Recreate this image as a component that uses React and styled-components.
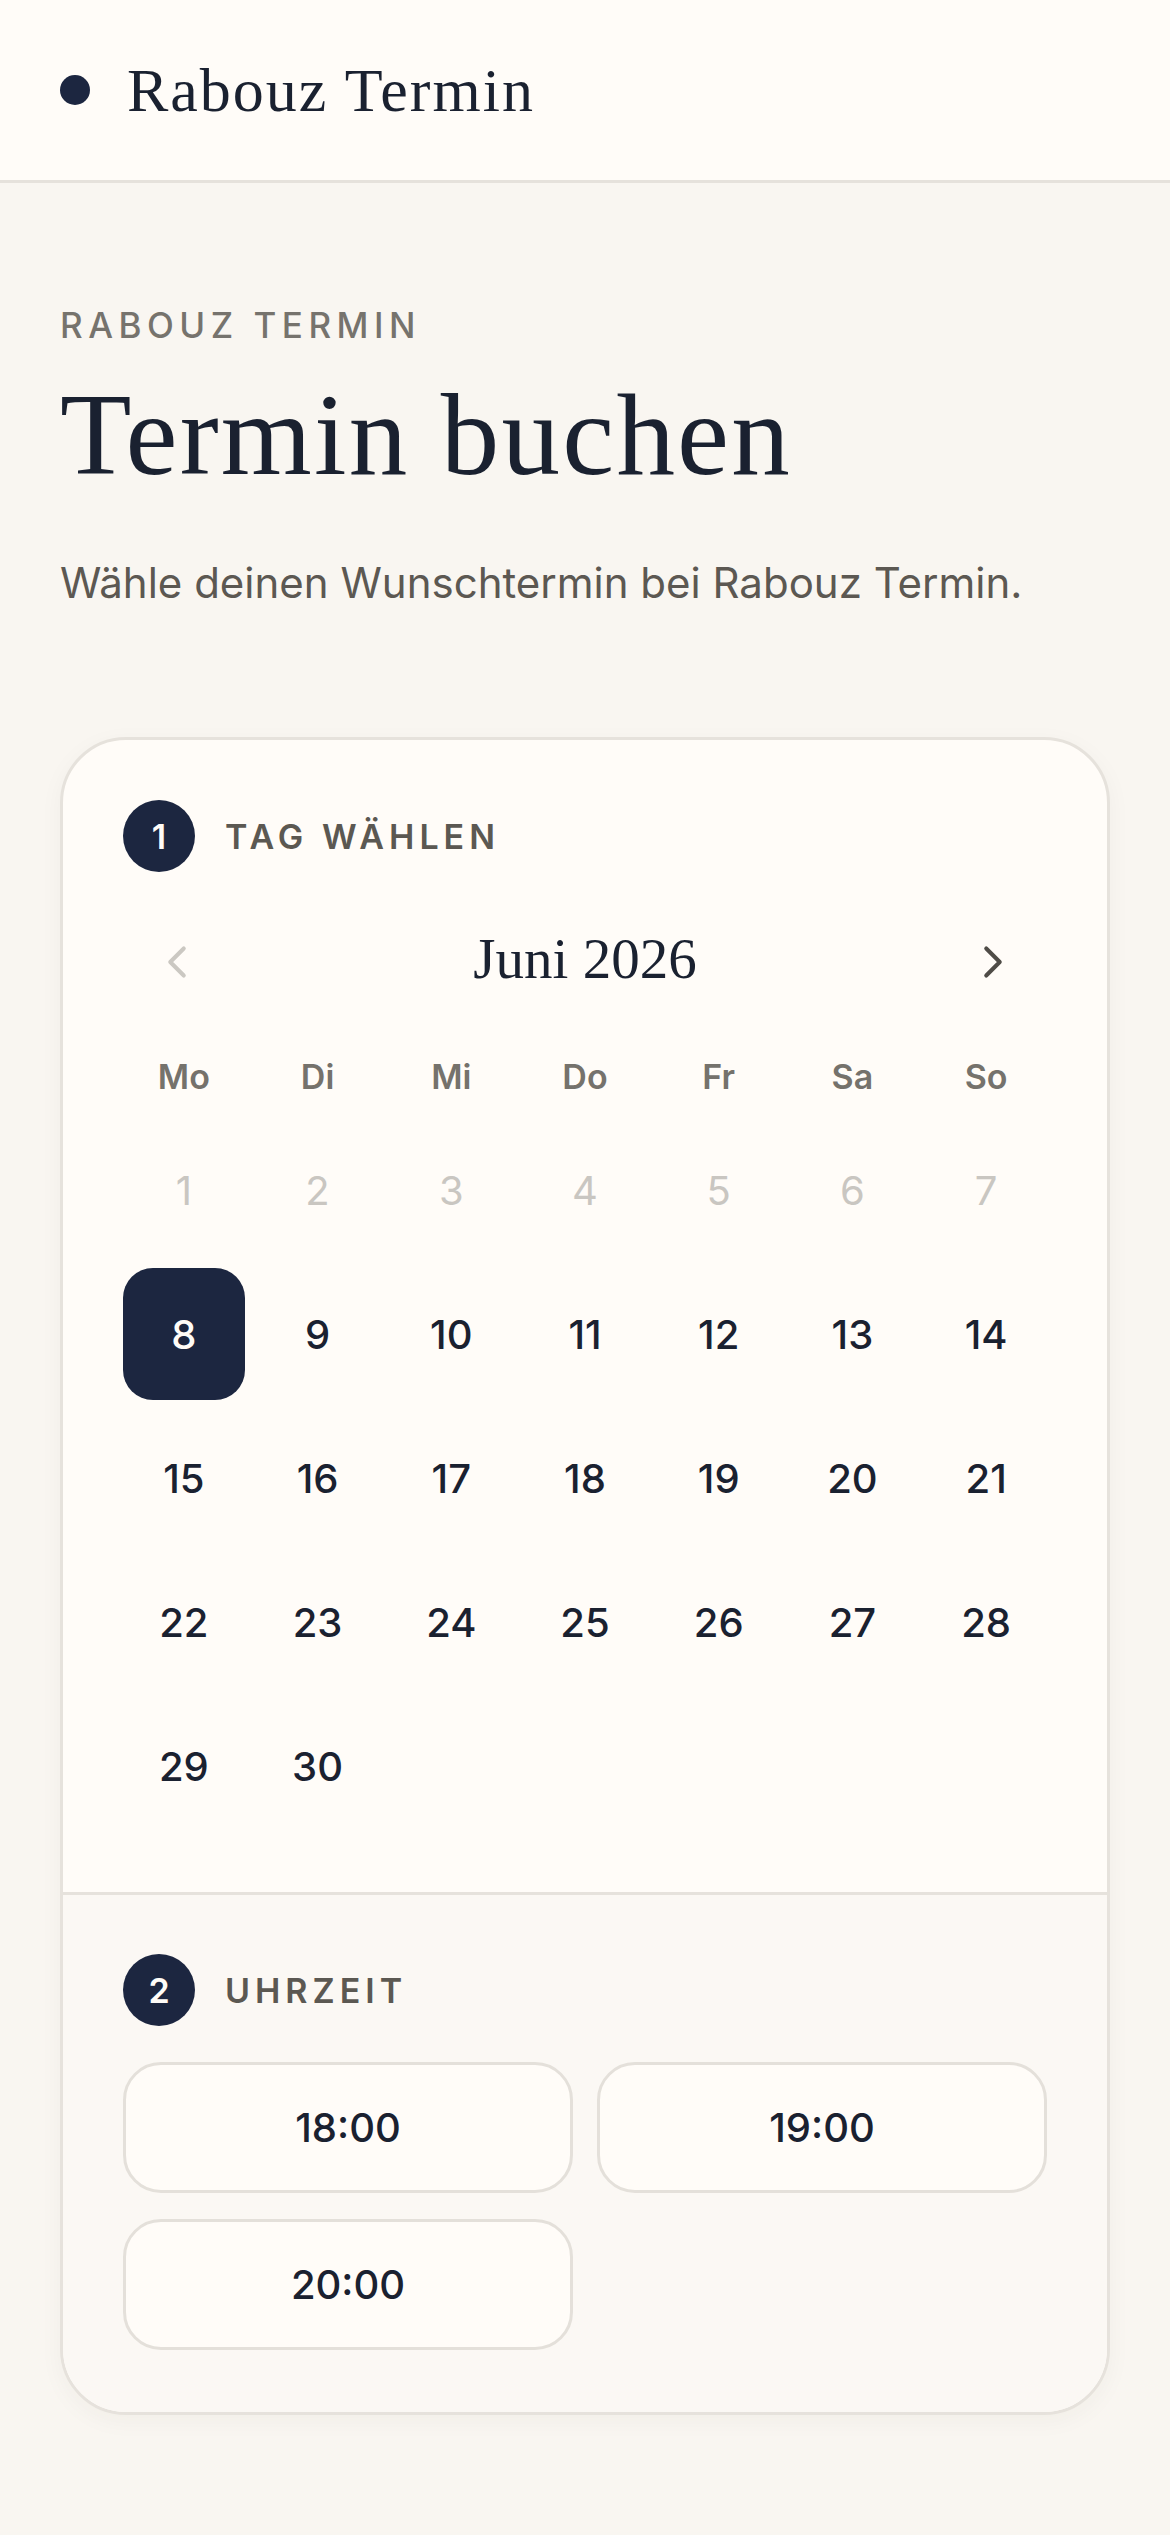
import React, { useState } from 'react';
import styled, { createGlobalStyle } from 'styled-components';
import { ChevronLeft, ChevronRight } from 'lucide-react';

const GlobalStyle = createGlobalStyle`
  * { box-sizing: border-box; }
  html, body {
    margin: 0;
    padding: 0;
    background: #f9f6f1;
  }
  body {
    font-family: Inter, "Noto Sans", sans-serif;
    color: #1a2130;
  }
`;

const Page = styled.div`
  min-height: 2535px;
  background: #f9f6f1;
`;

const Header = styled.header`
  height: 183px;
  display: flex;
  align-items: center;
  gap: 37px;
  padding: 0 60px;
  background: #fffcf8;
  border-bottom: 3px solid #e6e2dc;
`;

const Dot = styled.span`
  width: 30px;
  height: 30px;
  border-radius: 50%;
  background: #1c2640;
`;

const Brand = styled.div`
  font-family: "Liberation Serif", serif;
  font-size: 62px;
  color: #1a2130;
  letter-spacing: 2px;
`;

const Main = styled.main`
  padding: 121px 60px 124px;
`;

const Eyebrow = styled.div`
  font-size: 35px;
  line-height: 43px;
  letter-spacing: 5.5px;
  font-weight: 500;
  color: #76736d;
  text-transform: uppercase;
`;

const Title = styled.h1`
  margin: 26px 0 0;
  font-family: "Liberation Serif", serif;
  font-weight: 400;
  font-size: 117px;
  line-height: 123px;
  letter-spacing: 2.2px;
  color: #1a2130;
`;

const Lead = styled.p`
  margin: 54px 0 0;
  font-size: 42px;
  line-height: 66px;
  color: #5c5852;
`;

const Card = styled.section`
  margin-top: 121px;
  background: #fffcf8;
  border: 3px solid #e6e2dc;
  border-radius: 66px;
  overflow: hidden;
  box-shadow: 0 6px 24px rgba(60, 50, 30, 0.04);
`;

const Section = styled.div`
  padding: ${p => p.$pad};
  background: ${p => p.$bg || 'transparent'};
  border-top: ${p => (p.$divided ? '3px solid #e6e2dc' : 'none')};
`;

const StepHead = styled.div`
  display: flex;
  align-items: center;
  gap: 30px;
  margin-bottom: 36px;
`;

const StepNum = styled.span`
  width: 72px;
  height: 72px;
  border-radius: 50%;
  background: #1c2640;
  color: #fffcf8;
  display: flex;
  align-items: center;
  justify-content: center;
  font-size: 34px;
  font-weight: 600;
`;

const StepLabel = styled.span`
  font-size: 34px;
  font-weight: 600;
  letter-spacing: 5px;
  color: #5b5852;
  text-transform: uppercase;
`;

const MonthNav = styled.div`
  display: flex;
  align-items: center;
  justify-content: space-between;
  height: 108px;
`;

const NavButton = styled.button`
  width: 108px;
  height: 108px;
  display: flex;
  align-items: center;
  justify-content: center;
  border: none;
  background: transparent;
  padding: 0;
  color: ${p => (p.disabled ? '#cbc8c2' : '#4f4c47')};
  cursor: pointer;
`;

const Month = styled.div`
  font-family: "Liberation Serif", serif;
  font-size: 57px;
  color: #1a2130;
  margin-top: -8px;
`;

const Grid = styled.div`
  display: grid;
  grid-template-columns: repeat(7, 1fr);
  column-gap: 12px;
  row-gap: 12px;
`;

const Weekday = styled.div`
  height: 71px;
  display: flex;
  align-items: center;
  justify-content: center;
  font-size: 34px;
  font-weight: 600;
  color: #75726c;
  margin-top: 25px;
`;

const Day = styled.button`
  height: 132px;
  border: none;
  border-radius: 30px;
  padding: 0;
  font-family: Inter, "Noto Sans", sans-serif;
  font-size: 40px;
  background: ${p => (p.$selected ? '#1c2640' : 'transparent')};
  color: ${p => (p.$selected ? '#fffcf8' : p.disabled ? '#c9c6c1' : '#1a2130')};
  font-weight: ${p => (p.disabled ? 400 : 500)};
  cursor: ${p => (p.disabled ? 'default' : 'pointer')};
`;

const Slots = styled.div`
  display: grid;
  grid-template-columns: 1fr 1fr;
  gap: 26px 24px;
`;

const Slot = styled.button`
  height: 131px;
  border: 3px solid #e4e0da;
  border-radius: 38px;
  background: #fffcf8;
  font-family: Inter, "Noto Sans", sans-serif;
  font-size: 40px;
  font-weight: 500;
  color: #1a2130;
  cursor: pointer;
`;

const weekdays = ['Mo', 'Di', 'Mi', 'Do', 'Fr', 'Sa', 'So'];
const days = Array.from({ length: 30 }, (_, i) => i + 1);
const times = ['18:00', '19:00', '20:00'];

const App = () => {
  const [selected, setSelected] = useState(8);

  return (
    <Page>
      <GlobalStyle />
      <Header>
        <Dot />
        <Brand>Rabouz Termin</Brand>
      </Header>
      <Main>
        <Eyebrow>Rabouz Termin</Eyebrow>
        <Title>Termin buchen</Title>
        <Lead>Wähle deinen Wunschtermin bei Rabouz Termin.</Lead>

        <Card>
          <Section $pad="60px 60px 60px">
            <StepHead>
              <StepNum>1</StepNum>
              <StepLabel>Tag wählen</StepLabel>
            </StepHead>
            <MonthNav>
              <NavButton disabled aria-label="Vorheriger Monat">
                <ChevronLeft size={54} strokeWidth={1.8} />
              </NavButton>
              <Month>Juni 2026</Month>
              <NavButton aria-label="Nächster Monat">
                <ChevronRight size={54} strokeWidth={1.8} />
              </NavButton>
            </MonthNav>
            <Grid>
              {weekdays.map(w => (
                <Weekday key={w}>{w}</Weekday>
              ))}
              {days.map(d => (
                <Day
                  key={d}
                  disabled={d < 8}
                  $selected={d === selected}
                  onClick={() => setSelected(d)}
                >
                  {d}
                </Day>
              ))}
            </Grid>
          </Section>
          <Section $pad="59px 60px 62px" $bg="#fbf8f4" $divided>
            <StepHead>
              <StepNum>2</StepNum>
              <StepLabel>Uhrzeit</StepLabel>
            </StepHead>
            <Slots>
              {times.map(t => (
                <Slot key={t}>{t}</Slot>
              ))}
            </Slots>
          </Section>
        </Card>
      </Main>
    </Page>
  );
};

export default App;
